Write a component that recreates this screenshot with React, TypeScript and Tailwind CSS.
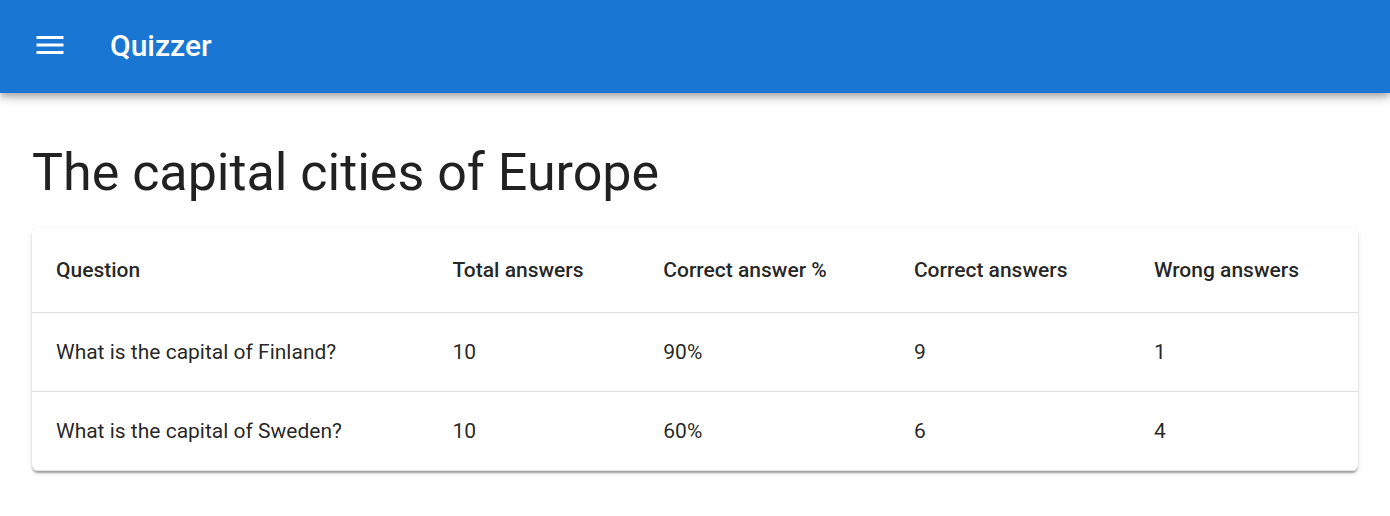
const columns = ['Question', 'Total answers', 'Correct answer %', 'Correct answers', 'Wrong answers'];

const rows = [
  { question: 'What is the capital of Finland?', total: 10, percent: '90%', correct: 9, wrong: 1 },
  { question: 'What is the capital of Sweden?', total: 10, percent: '60%', correct: 6, wrong: 4 },
];

function AppBar() {
  return (
    <header className="relative flex h-[93px] items-center gap-[30px] bg-[#1976d2] px-5 pb-[3px] text-white shadow-[0_3px_6px_-1px_rgba(0,0,0,0.2),0_6px_8px_0_rgba(0,0,0,0.14),0_1px_14px_0_rgba(0,0,0,0.12)]">
      <button type="button" aria-label="Open menu" className="flex items-center justify-center rounded-full p-3">
        <svg viewBox="0 0 24 24" className="size-9" fill="currentColor" aria-hidden="true">
          <path d="M3 18h18v-2H3zm0-5h18v-2H3zm0-7v2h18V6z" />
        </svg>
      </button>
      <h1 className="pt-0.5 text-[30px] leading-[42px] font-medium">Quizzer</h1>
    </header>
  );
}

function ResultsTable() {
  const cell = 'px-6 text-left';
  return (
    <div className="overflow-hidden rounded-md bg-white shadow-[0_3px_2px_-1px_rgba(0,0,0,0.2),0_2px_2px_0_rgba(0,0,0,0.14),0_2px_5px_0_rgba(0,0,0,0.12)]">
      <table className="w-full table-fixed border-separate border-spacing-0 text-[21px] leading-[30px] [&_td]:border-b [&_td]:border-[#e0e0e0] [&_th]:border-b [&_th]:border-[#e0e0e0]">
        <colgroup>
          <col className="w-[29.9%]" />
          <col className="w-[15.9%]" />
          <col className="w-[18.9%]" />
          <col className="w-[18.1%]" />
          <col />
        </colgroup>
        <thead>
          <tr className="h-[85px]">
            {columns.map((label) => (
              <th key={label} scope="col" className="px-6 text-left font-medium whitespace-nowrap">{label}</th>
            ))}
          </tr>
        </thead>
        <tbody>
          {rows.map((row) => (
            <tr key={row.question} className="h-[79px]">
              <td className={cell}>{row.question}</td>
              <td className={cell}>{row.total}</td>
              <td className={cell}>{row.percent}</td>
              <td className={cell}>{row.correct}</td>
              <td className={cell}>{row.wrong}</td>
            </tr>
          ))}
        </tbody>
      </table>
    </div>
  );
}

export default function App() {
  return (
    <div className="min-h-screen bg-white font-[Roboto,sans-serif] text-[rgba(0,0,0,0.87)]">
      <AppBar />
      <main className="px-8 pt-12 pb-11">
        <h2 className="mb-6 text-[52px] leading-[63px]">The capital cities of Europe</h2>
        <ResultsTable />
      </main>
    </div>
  );
}
